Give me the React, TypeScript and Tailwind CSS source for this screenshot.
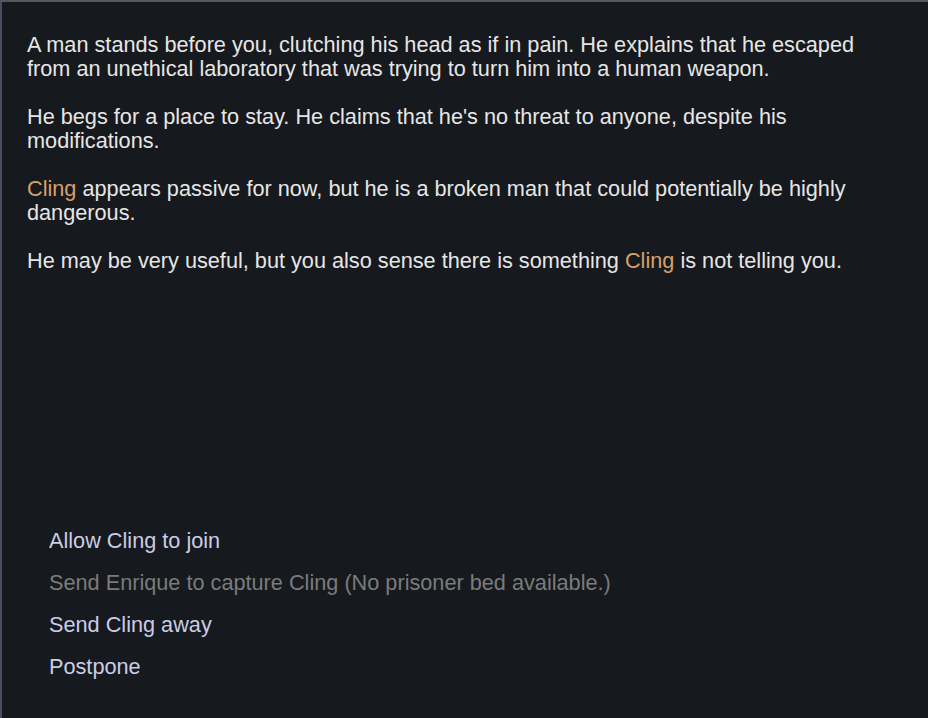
export default function App() {
  const Cling = () => <span className="text-[#d6a16a]">Cling</span>;

  const options = [
    { label: "Allow Cling to join", disabled: false },
    {
      label: "Send Enrique to capture Cling (No prisoner bed available.)",
      disabled: true,
    },
    { label: "Send Cling away", disabled: false },
    { label: "Postpone", disabled: false },
  ];

  return (
    <div
      className="w-[928px] h-[718px] bg-[#16191d] border-t-2 border-l-2 border-t-[#55585e] border-l-[#4a4e60] flex flex-col overflow-hidden"
      style={{ fontFamily: '"Liberation Sans", Arial, sans-serif' }}
    >
      <div className="pl-[25px] pr-[40px] pt-[31px] text-[21.7px] leading-[24px] text-[#e6e6e6] flex flex-col gap-[24px]">
        <p>
          A man stands before you, clutching his head as if in pain. He
          explains that he escaped from an unethical laboratory that was
          trying to turn him into a human weapon.
        </p>
        <p>
          He begs for a place to stay. He claims that he's no threat to
          anyone, despite his modifications.
        </p>
        <p>
          <Cling /> appears passive for now, but he is a broken man that could
          potentially be highly dangerous.
        </p>
        <p>
          He may be very useful, but you also sense there is something{" "}
          <Cling /> is not telling you.
        </p>
      </div>

      <div className="mt-auto pb-[39px] pl-[47px] flex flex-col gap-[18px] text-[21.7px] leading-[24px]">
        {options.map((o) => (
          <button
            key={o.label}
            disabled={o.disabled}
            className={
              "text-left w-fit " +
              (o.disabled ? "text-[#7b7b7b]" : "text-[#c9cde6]")
            }
          >
            {o.label}
          </button>
        ))}
      </div>
    </div>
  );
}
